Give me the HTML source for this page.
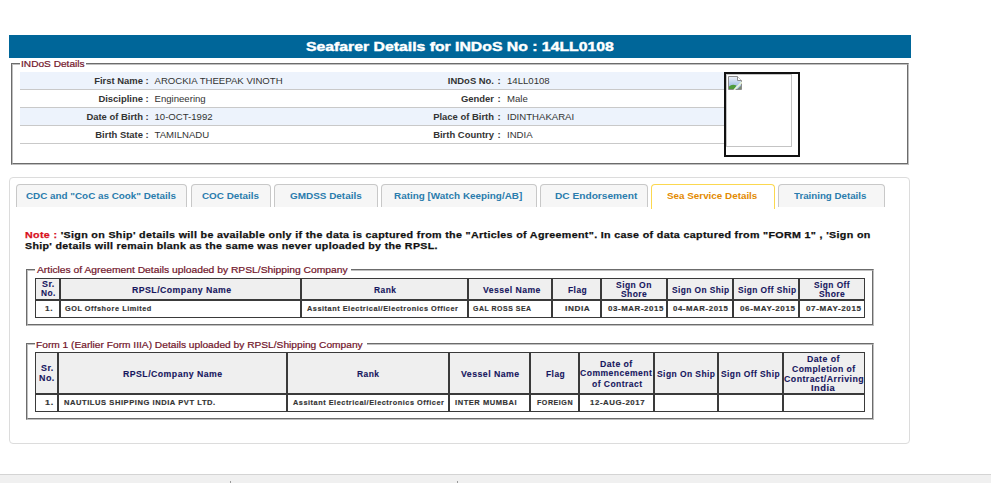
<!DOCTYPE html><html><head><meta charset="utf-8"><style>
html,body{margin:0;padding:0;}
body{width:991px;height:483px;position:relative;overflow:hidden;background:#fff;font-family:"Liberation Sans", sans-serif;}
.t{position:absolute;white-space:pre;transform-origin:0 0;}
.b{position:absolute;box-sizing:border-box;}
</style></head><body>
<div class="b" style="left:9px;top:35px;width:902px;height:23px;background:#006699"></div>
<div class="t" id="title" style="left:306.00px;top:40.00px;font-size:12.5px;font-weight:bold;color:#fff;line-height:15px;-webkit-text-stroke:0.4px #fff;transform:scaleX(1.2623);">Seafarer Details for INDoS No : 14LL0108</div>
<div class="b" style="left:11px;top:63px;width:898px;height:102px;border:2px groove #c0c0c0"></div>
<div class="b" style="left:20px;top:58px;width:66px;height:12px;background:#fff"></div>
<div class="t" id="leg0" style="left:20.65px;top:59.00px;font-size:9px;font-weight:normal;color:#72162b;line-height:11px;-webkit-text-stroke:0.2px #72162b;transform:scaleX(1.1253);">INDoS Details</div>
<div class="b" style="left:20px;top:72px;width:704px;height:18px;background:#edf3fc;border-bottom:1px solid #c9c9c9"></div>
<div class="t" style="left:0;top:74px;width:143px;text-align:right;font-size:9.45px;font-weight:bold;color:#333;line-height:13px">First Name</div>
<div class="t" style="left:145.5px;top:74px;font-size:9.45px;font-weight:bold;color:#333;line-height:13px">:</div>
<div class="t" style="left:154.5px;top:74px;font-size:9.6px;color:#333;line-height:13px">AROCKIA THEEPAK VINOTH</div>
<div class="t" style="left:0;top:74px;width:494px;text-align:right;font-size:9.45px;font-weight:bold;color:#333;line-height:13px">INDoS No.</div>
<div class="t" style="left:497.5px;top:74px;font-size:9.45px;font-weight:bold;color:#333;line-height:13px">:</div>
<div class="t" style="left:507px;top:74px;font-size:9.6px;color:#333;line-height:13px">14LL0108</div>
<div class="b" style="left:20px;top:90px;width:704px;height:18px;background:#fff;border-bottom:1px solid #c9c9c9"></div>
<div class="t" style="left:0;top:92px;width:143px;text-align:right;font-size:9.45px;font-weight:bold;color:#333;line-height:13px">Discipline</div>
<div class="t" style="left:145.5px;top:92px;font-size:9.45px;font-weight:bold;color:#333;line-height:13px">:</div>
<div class="t" style="left:154.5px;top:92px;font-size:9.6px;color:#333;line-height:13px">Engineering</div>
<div class="t" style="left:0;top:92px;width:494px;text-align:right;font-size:9.45px;font-weight:bold;color:#333;line-height:13px">Gender</div>
<div class="t" style="left:497.5px;top:92px;font-size:9.45px;font-weight:bold;color:#333;line-height:13px">:</div>
<div class="t" style="left:507px;top:92px;font-size:9.6px;color:#333;line-height:13px">Male</div>
<div class="b" style="left:20px;top:108px;width:704px;height:18px;background:#edf3fc;border-bottom:1px solid #c9c9c9"></div>
<div class="t" style="left:0;top:110px;width:143px;text-align:right;font-size:9.45px;font-weight:bold;color:#333;line-height:13px">Date of Birth</div>
<div class="t" style="left:145.5px;top:110px;font-size:9.45px;font-weight:bold;color:#333;line-height:13px">:</div>
<div class="t" style="left:154.5px;top:110px;font-size:9.6px;color:#333;line-height:13px">10-OCT-1992</div>
<div class="t" style="left:0;top:110px;width:494px;text-align:right;font-size:9.45px;font-weight:bold;color:#333;line-height:13px">Place of Birth</div>
<div class="t" style="left:497.5px;top:110px;font-size:9.45px;font-weight:bold;color:#333;line-height:13px">:</div>
<div class="t" style="left:507px;top:110px;font-size:9.6px;color:#333;line-height:13px">IDINTHAKARAI</div>
<div class="b" style="left:20px;top:126px;width:704px;height:18px;background:#fff;border-bottom:1px solid #c9c9c9"></div>
<div class="t" style="left:0;top:128px;width:143px;text-align:right;font-size:9.45px;font-weight:bold;color:#333;line-height:13px">Birth State</div>
<div class="t" style="left:145.5px;top:128px;font-size:9.45px;font-weight:bold;color:#333;line-height:13px">:</div>
<div class="t" style="left:154.5px;top:128px;font-size:9.6px;color:#333;line-height:13px">TAMILNADU</div>
<div class="t" style="left:0;top:128px;width:494px;text-align:right;font-size:9.45px;font-weight:bold;color:#333;line-height:13px">Birth Country</div>
<div class="t" style="left:497.5px;top:128px;font-size:9.45px;font-weight:bold;color:#333;line-height:13px">:</div>
<div class="t" style="left:507px;top:128px;font-size:9.6px;color:#333;line-height:13px">INDIA</div>
<div class="b" style="left:724px;top:72px;width:76px;height:85px;border:2px solid #111;background:#fff"></div>
<div class="b" style="left:726px;top:74px;width:66px;height:73px;border:1px solid #c4c4c4"></div>
<svg style="position:absolute;left:728px;top:76px" width="14" height="14" viewBox="0 0 14 14">
<defs><linearGradient id="sky" x1="0" y1="0" x2="0" y2="1"><stop offset="0" stop-color="#eef2f8"/><stop offset="0.7" stop-color="#a8c2e6"/></linearGradient></defs>
<path d="M0.5 0.5H9.5L13.5 4.5V13.5H0.5Z" fill="url(#sky)" stroke="#8c8c8c"/>
<path d="M9.5 0.5V4.5H13.5" fill="#fff" stroke="#8c8c8c"/>
<path d="M1 13V10.5Q4 7.5 8.5 9.5L6.5 13Z" fill="#4f9a3a"/>
<path d="M9.5 13L13 9.8V13Z" fill="#7a8a70"/>
<path d="M6 14L14 6" stroke="#e8f4d8" stroke-width="1.6"/>
</svg>
<div class="b" style="left:9px;top:177px;width:901px;height:267px;border:1px solid #dcdcdc;border-radius:4px"></div>
<div class="b" style="left:16px;top:184px;width:171px;height:23px;background:#f6f6f6;border:1px solid #c8c8c8;border-bottom:none;border-radius:4px 4px 0 0"></div>
<div class="t" id="tab0" style="left:26.19px;top:190.00px;font-size:9.5px;font-weight:bold;color:#2a7cad;line-height:11px;transform:scaleX(1.0369);">CDC and &quot;CoC as Cook&quot; Details</div>
<div class="b" style="left:191px;top:184px;width:80px;height:23px;background:#f6f6f6;border:1px solid #c8c8c8;border-bottom:none;border-radius:4px 4px 0 0"></div>
<div class="t" id="tab1" style="left:202.00px;top:190.00px;font-size:9.5px;font-weight:bold;color:#2a7cad;line-height:11px;transform:scaleX(1.0383);">COC Details</div>
<div class="b" style="left:274px;top:184px;width:104px;height:23px;background:#f6f6f6;border:1px solid #c8c8c8;border-bottom:none;border-radius:4px 4px 0 0"></div>
<div class="t" id="tab2" style="left:290.00px;top:190.00px;font-size:9.5px;font-weight:bold;color:#2a7cad;line-height:11px;transform:scaleX(1.0450);">GMDSS Details</div>
<div class="b" style="left:381px;top:184px;width:156px;height:23px;background:#f6f6f6;border:1px solid #c8c8c8;border-bottom:none;border-radius:4px 4px 0 0"></div>
<div class="t" id="tab3" style="left:393.96px;top:190.00px;font-size:9.5px;font-weight:bold;color:#2a7cad;line-height:11px;transform:scaleX(1.0414);">Rating [Watch Keeping/AB]</div>
<div class="b" style="left:540px;top:184px;width:108px;height:23px;background:#f6f6f6;border:1px solid #c8c8c8;border-bottom:none;border-radius:4px 4px 0 0"></div>
<div class="t" id="tab4" style="left:555.12px;top:190.00px;font-size:9.5px;font-weight:bold;color:#2a7cad;line-height:11px;transform:scaleX(1.0681);">DC Endorsement</div>
<div class="b" style="left:651px;top:184px;width:124px;height:25px;background:#fff;border:1px solid #fbd850;border-bottom:none;border-radius:4px 4px 0 0"></div>
<div class="t" id="tab5" style="left:666.94px;top:190.00px;font-size:9.5px;font-weight:bold;color:#e38a00;line-height:11px;transform:scaleX(1.0366);">Sea Service Details</div>
<div class="b" style="left:778px;top:184px;width:107px;height:23px;background:#f6f6f6;border:1px solid #c8c8c8;border-bottom:none;border-radius:4px 4px 0 0"></div>
<div class="t" id="tab6" style="left:794.00px;top:190.00px;font-size:9.5px;font-weight:bold;color:#2a7cad;line-height:11px;transform:scaleX(1.0227);">Training Details</div>
<div class="t" id="note1" style="left:25.00px;top:229.00px;font-size:9.5px;font-weight:bold;color:#111;line-height:12px;letter-spacing:0.3px;-webkit-text-stroke:0.25px #111;transform:scaleX(1.1256);"><span style="color:#d8101c;-webkit-text-stroke-color:#d8101c">Note : </span>&#39;Sign on Ship&#39; details will be available only if the data is captured from the &quot;Articles of Agreement&quot;. In case of data captured from &quot;FORM 1&quot; , &#39;Sign on</div>
<div class="t" id="note2" style="left:25.00px;top:240.00px;font-size:9.5px;font-weight:bold;color:#111;line-height:12px;letter-spacing:0.3px;-webkit-text-stroke:0.25px #111;transform:scaleX(1.1189);">Ship&#39; details will remain blank as the same was never uploaded by the RPSL.</div>
<div class="b" style="left:26px;top:269px;width:848px;height:57px;border:2px groove #c0c0c0"></div>
<div class="b" style="left:35px;top:263px;width:316px;height:12px;background:#fff"></div>
<div class="t" id="leg1" style="left:37.00px;top:265.00px;font-size:9px;font-weight:normal;color:#72162b;line-height:11px;-webkit-text-stroke:0.2px #72162b;transform:scaleX(1.1434);">Articles of Agreement Details uploaded by RPSL/Shipping Company</div>
<div class="b" style="left:35px;top:278px;width:25px;height:22px;border:1px solid #3a3a3a;background:#efefef"></div>
<div class="b" style="left:35px;top:300px;width:25px;height:18px;border:1px solid #3a3a3a;background:#fff"></div>
<div class="t" id="ah0_0" style="left:41.83px;top:278.50px;font-size:8.6px;font-weight:bold;color:#16165e;line-height:10px;letter-spacing:0.45px;-webkit-text-stroke:0.1px #16165e;transform:scaleX(1.0354);">Sr.</div>
<div class="t" id="ah0_1" style="left:40.57px;top:288.00px;font-size:8.6px;font-weight:bold;color:#16165e;line-height:10px;letter-spacing:0.45px;-webkit-text-stroke:0.1px #16165e;transform:scaleX(0.9736);">No.</div>
<div class="t" id="ab0" style="left:45.39px;top:303.80px;font-size:7.4px;font-weight:bold;color:#333;line-height:9px;letter-spacing:0.55px;-webkit-text-stroke:0.15px #333;transform:scaleX(1.1226);">1.</div>
<div class="b" style="left:60px;top:278px;width:241px;height:22px;border:1px solid #3a3a3a;background:#efefef"></div>
<div class="b" style="left:60px;top:300px;width:241px;height:18px;border:1px solid #3a3a3a;background:#fff"></div>
<div class="t" id="ah1_0" style="left:131.96px;top:284.50px;font-size:8.6px;font-weight:bold;color:#16165e;line-height:10px;letter-spacing:0.45px;-webkit-text-stroke:0.1px #16165e;transform:scaleX(1.0176);">RPSL/Company Name</div>
<div class="t" id="ab1" style="left:65.30px;top:304.30px;font-size:7.4px;font-weight:bold;color:#333;line-height:9px;letter-spacing:0.55px;-webkit-text-stroke:0.15px #333;transform:scaleX(0.9864);">GOL Offshore Limited</div>
<div class="b" style="left:301px;top:278px;width:167px;height:22px;border:1px solid #3a3a3a;background:#efefef"></div>
<div class="b" style="left:301px;top:300px;width:167px;height:18px;border:1px solid #3a3a3a;background:#fff"></div>
<div class="t" id="ah2_0" style="left:373.60px;top:285.20px;font-size:8.6px;font-weight:bold;color:#16165e;line-height:10px;letter-spacing:0.45px;-webkit-text-stroke:0.1px #16165e;transform:scaleX(0.9844);">Rank</div>
<div class="t" id="ab2" style="left:306.60px;top:304.20px;font-size:7.4px;font-weight:bold;color:#333;line-height:9px;letter-spacing:0.55px;-webkit-text-stroke:0.15px #333;transform:scaleX(0.9876);">Assitant Electrical/Electronics Officer</div>
<div class="b" style="left:468px;top:278px;width:84px;height:22px;border:1px solid #3a3a3a;background:#efefef"></div>
<div class="b" style="left:468px;top:300px;width:84px;height:18px;border:1px solid #3a3a3a;background:#fff"></div>
<div class="t" id="ah3_0" style="left:482.61px;top:285.20px;font-size:8.6px;font-weight:bold;color:#16165e;line-height:10px;letter-spacing:0.45px;-webkit-text-stroke:0.1px #16165e;transform:scaleX(1.0054);">Vessel Name</div>
<div class="t" id="ab3" style="left:473.05px;top:304.40px;font-size:7.4px;font-weight:bold;color:#333;line-height:9px;letter-spacing:0.55px;-webkit-text-stroke:0.15px #333;transform:scaleX(0.9397);">GAL ROSS SEA</div>
<div class="b" style="left:552px;top:278px;width:49px;height:22px;border:1px solid #3a3a3a;background:#efefef"></div>
<div class="b" style="left:552px;top:300px;width:49px;height:18px;border:1px solid #3a3a3a;background:#fff"></div>
<div class="t" id="ah4_0" style="left:568.21px;top:285.20px;font-size:8.6px;font-weight:bold;color:#16165e;line-height:10px;letter-spacing:0.45px;-webkit-text-stroke:0.1px #16165e;transform:scaleX(0.9816);">Flag</div>
<div class="t" id="ab4" style="left:565.23px;top:304.40px;font-size:7.4px;font-weight:bold;color:#333;line-height:9px;letter-spacing:0.55px;-webkit-text-stroke:0.15px #333;transform:scaleX(1.1108);">INDIA</div>
<div class="b" style="left:601px;top:278px;width:66px;height:22px;border:1px solid #3a3a3a;background:#efefef"></div>
<div class="b" style="left:601px;top:300px;width:66px;height:18px;border:1px solid #3a3a3a;background:#fff"></div>
<div class="t" id="ah5_0" style="left:616.40px;top:279.50px;font-size:8.6px;font-weight:bold;color:#16165e;line-height:10px;letter-spacing:0.45px;-webkit-text-stroke:0.1px #16165e;transform:scaleX(0.9918);">Sign On</div>
<div class="t" id="ah5_1" style="left:621.20px;top:289.00px;font-size:8.6px;font-weight:bold;color:#16165e;line-height:10px;letter-spacing:0.45px;-webkit-text-stroke:0.1px #16165e;transform:scaleX(0.9865);">Shore</div>
<div class="t" id="ab5" style="left:607.68px;top:304.30px;font-size:7.4px;font-weight:bold;color:#333;line-height:9px;letter-spacing:0.55px;-webkit-text-stroke:0.15px #333;transform:scaleX(1.0671);">03-MAR-2015</div>
<div class="b" style="left:667px;top:278px;width:66px;height:22px;border:1px solid #3a3a3a;background:#efefef"></div>
<div class="b" style="left:667px;top:300px;width:66px;height:18px;border:1px solid #3a3a3a;background:#fff"></div>
<div class="t" id="ah6_0" style="left:671.80px;top:285.20px;font-size:8.6px;font-weight:bold;color:#16165e;line-height:10px;letter-spacing:0.45px;-webkit-text-stroke:0.1px #16165e;transform:scaleX(0.9710);">Sign On Ship</div>
<div class="t" id="ab6" style="left:673.45px;top:304.30px;font-size:7.4px;font-weight:bold;color:#333;line-height:9px;letter-spacing:0.55px;-webkit-text-stroke:0.15px #333;transform:scaleX(1.0558);">04-MAR-2015</div>
<div class="b" style="left:733px;top:278px;width:66px;height:22px;border:1px solid #3a3a3a;background:#efefef"></div>
<div class="b" style="left:733px;top:300px;width:66px;height:18px;border:1px solid #3a3a3a;background:#fff"></div>
<div class="t" id="ah7_0" style="left:737.61px;top:285.20px;font-size:8.6px;font-weight:bold;color:#16165e;line-height:10px;letter-spacing:0.45px;-webkit-text-stroke:0.1px #16165e;transform:scaleX(0.9715);">Sign Off Ship</div>
<div class="t" id="ab7" style="left:739.52px;top:304.40px;font-size:7.4px;font-weight:bold;color:#333;line-height:9px;letter-spacing:0.55px;-webkit-text-stroke:0.15px #333;transform:scaleX(1.0906);">06-MAY-2015</div>
<div class="b" style="left:799px;top:278px;width:66px;height:22px;border:1px solid #3a3a3a;background:#efefef"></div>
<div class="b" style="left:799px;top:300px;width:66px;height:18px;border:1px solid #3a3a3a;background:#fff"></div>
<div class="t" id="ah8_0" style="left:814.39px;top:279.50px;font-size:8.6px;font-weight:bold;color:#16165e;line-height:10px;letter-spacing:0.45px;-webkit-text-stroke:0.1px #16165e;transform:scaleX(0.9730);">Sign Off</div>
<div class="t" id="ah8_1" style="left:819.20px;top:289.00px;font-size:8.6px;font-weight:bold;color:#16165e;line-height:10px;letter-spacing:0.45px;-webkit-text-stroke:0.1px #16165e;transform:scaleX(0.9865);">Shore</div>
<div class="t" id="ab8" style="left:805.52px;top:304.40px;font-size:7.4px;font-weight:bold;color:#333;line-height:9px;letter-spacing:0.55px;-webkit-text-stroke:0.15px #333;transform:scaleX(1.0906);">07-MAY-2015</div>
<div class="b" style="left:26px;top:343px;width:848px;height:77px;border:2px groove #c0c0c0"></div>
<div class="b" style="left:35px;top:337px;width:332px;height:12px;background:#fff"></div>
<div class="t" id="leg2" style="left:35.96px;top:340.00px;font-size:9px;font-weight:normal;color:#72162b;line-height:11px;-webkit-text-stroke:0.2px #72162b;transform:scaleX(1.1319);">Form 1 (Earlier Form IIIA) Details uploaded by RPSL/Shipping Company</div>
<div class="b" style="left:35px;top:352px;width:23px;height:42px;border:1px solid #3a3a3a;background:#efefef"></div>
<div class="b" style="left:35px;top:394px;width:23px;height:18px;border:1px solid #3a3a3a;background:#fff"></div>
<div class="t" id="fh0_0" style="left:40.83px;top:362.60px;font-size:8.6px;font-weight:bold;color:#16165e;line-height:10px;letter-spacing:0.45px;-webkit-text-stroke:0.1px #16165e;transform:scaleX(1.0354);">Sr.</div>
<div class="t" id="fh0_1" style="left:39.19px;top:372.70px;font-size:8.6px;font-weight:bold;color:#16165e;line-height:10px;letter-spacing:0.45px;-webkit-text-stroke:0.1px #16165e;transform:scaleX(1.0330);">No.</div>
<div class="t" id="fb0" style="left:44.74px;top:397.50px;font-size:7.4px;font-weight:bold;color:#333;line-height:9px;letter-spacing:0.55px;-webkit-text-stroke:0.15px #333;transform:scaleX(1.2230);">1.</div>
<div class="b" style="left:58px;top:352px;width:229px;height:42px;border:1px solid #3a3a3a;background:#efefef"></div>
<div class="b" style="left:58px;top:394px;width:229px;height:18px;border:1px solid #3a3a3a;background:#fff"></div>
<div class="t" id="fh1_0" style="left:123.17px;top:369.30px;font-size:8.6px;font-weight:bold;color:#16165e;line-height:10px;letter-spacing:0.45px;-webkit-text-stroke:0.1px #16165e;transform:scaleX(1.0176);">RPSL/Company Name</div>
<div class="t" id="fb1" style="left:64.18px;top:398.10px;font-size:7.4px;font-weight:bold;color:#333;line-height:9px;letter-spacing:0.55px;-webkit-text-stroke:0.15px #333;transform:scaleX(1.0212);">NAUTILUS SHIPPING INDIA PVT LTD.</div>
<div class="b" style="left:287px;top:352px;width:162px;height:42px;border:1px solid #3a3a3a;background:#efefef"></div>
<div class="b" style="left:287px;top:394px;width:162px;height:18px;border:1px solid #3a3a3a;background:#fff"></div>
<div class="t" id="fh2_0" style="left:357.37px;top:369.30px;font-size:8.6px;font-weight:bold;color:#16165e;line-height:10px;letter-spacing:0.45px;-webkit-text-stroke:0.1px #16165e;transform:scaleX(0.9844);">Rank</div>
<div class="t" id="fb2" style="left:292.60px;top:398.10px;font-size:7.4px;font-weight:bold;color:#333;line-height:9px;letter-spacing:0.55px;-webkit-text-stroke:0.15px #333;transform:scaleX(0.9876);">Assitant Electrical/Electronics Officer</div>
<div class="b" style="left:449px;top:352px;width:81px;height:42px;border:1px solid #3a3a3a;background:#efefef"></div>
<div class="b" style="left:449px;top:394px;width:81px;height:18px;border:1px solid #3a3a3a;background:#fff"></div>
<div class="t" id="fh3_0" style="left:461.00px;top:368.50px;font-size:8.6px;font-weight:bold;color:#16165e;line-height:10px;letter-spacing:0.45px;-webkit-text-stroke:0.1px #16165e;transform:scaleX(1.0197);">Vessel Name</div>
<div class="t" id="fb3" style="left:455.00px;top:397.50px;font-size:7.4px;font-weight:bold;color:#333;line-height:9px;letter-spacing:0.55px;-webkit-text-stroke:0.15px #333;transform:scaleX(1.0167);">INTER MUMBAI</div>
<div class="b" style="left:530px;top:352px;width:49px;height:42px;border:1px solid #3a3a3a;background:#efefef"></div>
<div class="b" style="left:530px;top:394px;width:49px;height:18px;border:1px solid #3a3a3a;background:#fff"></div>
<div class="t" id="fh4_0" style="left:546.00px;top:368.50px;font-size:8.6px;font-weight:bold;color:#16165e;line-height:10px;letter-spacing:0.45px;-webkit-text-stroke:0.1px #16165e;transform:scaleX(0.9816);">Flag</div>
<div class="t" id="fb4" style="left:537.42px;top:397.50px;font-size:7.4px;font-weight:bold;color:#333;line-height:9px;letter-spacing:0.55px;-webkit-text-stroke:0.15px #333;transform:scaleX(0.9606);">FOREIGN</div>
<div class="b" style="left:579px;top:352px;width:75px;height:42px;border:1px solid #3a3a3a;background:#efefef"></div>
<div class="b" style="left:579px;top:394px;width:75px;height:18px;border:1px solid #3a3a3a;background:#fff"></div>
<div class="t" id="fh5_0" style="left:600.17px;top:358.50px;font-size:8.6px;font-weight:bold;color:#16165e;line-height:10px;letter-spacing:0.45px;-webkit-text-stroke:0.1px #16165e;transform:scaleX(1.0134);">Date of</div>
<div class="t" id="fh5_1" style="left:580.40px;top:367.50px;font-size:8.6px;font-weight:bold;color:#16165e;line-height:10px;letter-spacing:0.45px;-webkit-text-stroke:0.1px #16165e;transform:scaleX(1.0017);">Commencement</div>
<div class="t" id="fh5_2" style="left:592.00px;top:378.50px;font-size:8.6px;font-weight:bold;color:#16165e;line-height:10px;letter-spacing:0.45px;-webkit-text-stroke:0.1px #16165e;transform:scaleX(0.9942);">of Contract</div>
<div class="t" id="fb5" style="left:590.13px;top:397.50px;font-size:7.4px;font-weight:bold;color:#333;line-height:9px;letter-spacing:0.55px;-webkit-text-stroke:0.15px #333;transform:scaleX(1.0595);">12-AUG-2017</div>
<div class="b" style="left:654px;top:352px;width:64px;height:42px;border:1px solid #3a3a3a;background:#efefef"></div>
<div class="b" style="left:654px;top:394px;width:64px;height:18px;border:1px solid #3a3a3a;background:#fff"></div>
<div class="t" id="fh6_0" style="left:657.40px;top:368.50px;font-size:8.6px;font-weight:bold;color:#16165e;line-height:10px;letter-spacing:0.45px;-webkit-text-stroke:0.1px #16165e;transform:scaleX(0.9852);">Sign On Ship</div>
<div class="b" style="left:718px;top:352px;width:65px;height:42px;border:1px solid #3a3a3a;background:#efefef"></div>
<div class="b" style="left:718px;top:394px;width:65px;height:18px;border:1px solid #3a3a3a;background:#fff"></div>
<div class="t" id="fh7_0" style="left:721.00px;top:368.50px;font-size:8.6px;font-weight:bold;color:#16165e;line-height:10px;letter-spacing:0.45px;-webkit-text-stroke:0.1px #16165e;transform:scaleX(0.9790);">Sign Off Ship</div>
<div class="b" style="left:783px;top:352px;width:82px;height:42px;border:1px solid #3a3a3a;background:#efefef"></div>
<div class="b" style="left:783px;top:394px;width:82px;height:18px;border:1px solid #3a3a3a;background:#fff"></div>
<div class="t" id="fh8_0" style="left:806.97px;top:354.40px;font-size:8.6px;font-weight:bold;color:#16165e;line-height:10px;letter-spacing:0.45px;-webkit-text-stroke:0.1px #16165e;transform:scaleX(1.0196);">Date of</div>
<div class="t" id="fh8_1" style="left:792.00px;top:364.40px;font-size:8.6px;font-weight:bold;color:#16165e;line-height:10px;letter-spacing:0.45px;-webkit-text-stroke:0.1px #16165e;transform:scaleX(0.9988);">Completion of</div>
<div class="t" id="fh8_2" style="left:784.17px;top:374.40px;font-size:8.6px;font-weight:bold;color:#16165e;line-height:10px;letter-spacing:0.45px;-webkit-text-stroke:0.1px #16165e;transform:scaleX(1.0236);">Contract/Arriving</div>
<div class="t" id="fh8_3" style="left:810.99px;top:382.90px;font-size:8.6px;font-weight:bold;color:#16165e;line-height:10px;letter-spacing:0.45px;-webkit-text-stroke:0.1px #16165e;transform:scaleX(1.0890);">India</div>
<div class="b" style="left:0;top:474px;width:991px;height:9px;background:#f0f0f0;border-top:1px solid #d4d4d4"></div>
<div class="b" style="left:230px;top:481px;width:1px;height:2px;background:#999"></div>
<div class="b" style="left:457px;top:481px;width:1px;height:2px;background:#999"></div>
</body></html>
